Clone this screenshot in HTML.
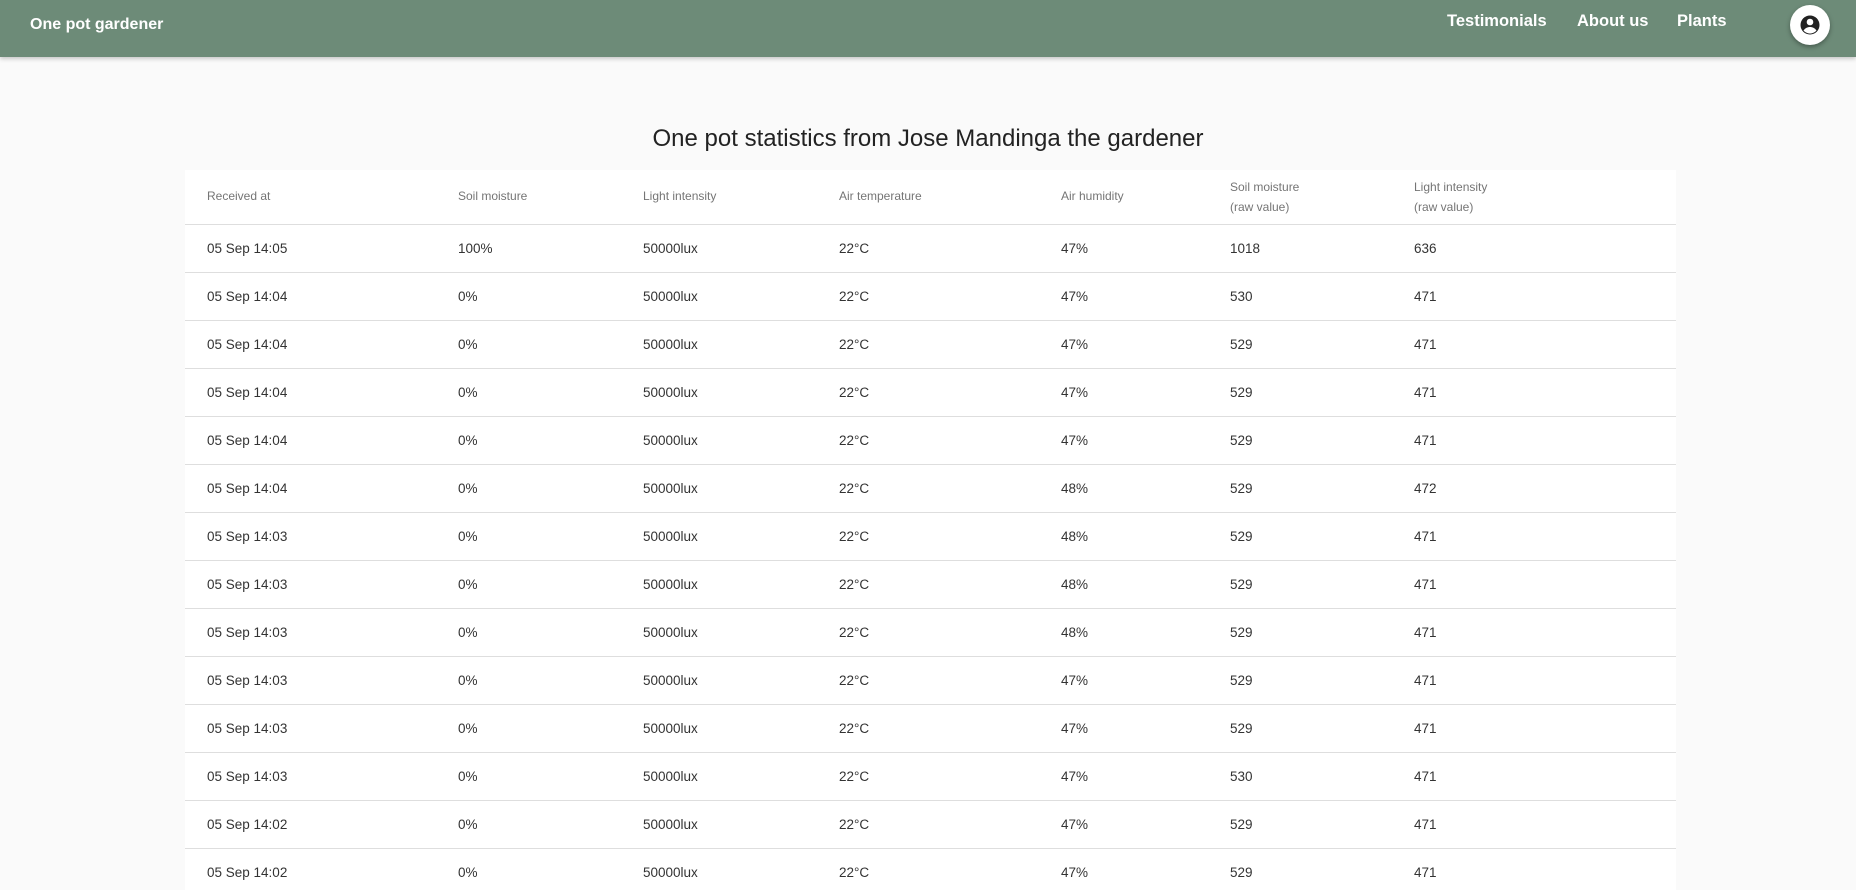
<!DOCTYPE html>
<html><head><meta charset="utf-8"><style>
*{margin:0;padding:0;box-sizing:border-box}
html,body{width:1856px;height:890px;overflow:hidden;background:#fafafa;font-family:"Liberation Sans",sans-serif}
.hdr{position:absolute;left:0;top:0;width:1856px;height:57px;background:#6d8b78;box-shadow:0 2px 4px rgba(0,0,0,.2)}
.brand{position:absolute;left:30px;top:16px;color:#fff;font-weight:bold;font-size:16px}
.nav{position:absolute;top:12px;color:#fff;font-weight:bold;font-size:16.5px}
.av{position:absolute;left:1790px;top:5px;width:40px;height:40px;border-radius:50%;background:#fff;box-shadow:0 2px 5px rgba(0,0,0,.35)}
h1{position:absolute;left:0;width:1856px;top:125px;text-align:center;font-weight:normal;font-size:24px;color:#222}
.tbl{position:absolute;left:185px;top:170px;width:1491px;height:720px;background:#fff;overflow:hidden}
.row{position:absolute;left:0;width:1491px;border-bottom:1px solid #dedede}
.c{position:absolute;white-space:nowrap}
.h .c{font-size:12px;color:#757575;line-height:20px}
.b .c{font-size:13.5px;color:#333}
</style></head><body>
<div class="hdr">
<div class="brand">One pot gardener</div>
<div class="nav" style="left:1447px">Testimonials</div>
<div class="nav" style="left:1577px">About us</div>
<div class="nav" style="left:1677px">Plants</div>
<div class="av"><svg width="40" height="40" viewBox="0 0 40 40"><circle cx="20" cy="20" r="9.5" fill="#222"/><circle cx="20" cy="17" r="3.3" fill="#fff"/><path d="M13.5 25.5c1.5-2.3 4-3.5 6.5-3.5s5 1.2 6.5 3.5c-1.6 1.8-3.9 3-6.5 3s-4.9-1.2-6.5-3z" fill="#fff"/></svg></div>
</div>
<h1>One pot statistics from Jose Mandinga the gardener</h1>
<div class="tbl" id="t"></div>
<script>
var t=document.getElementById('t');
var xs=[22,273,458,654,876,1045,1229];
var h=document.createElement('div');h.className='row h';h.style.top='0';h.style.height='55px';
var hd=[['Received at'],['Soil moisture'],['Light intensity'],['Air temperature'],['Air humidity'],['Soil moisture','(raw value)'],['Light intensity','(raw value)']];
hd.forEach(function(a,i){var d=document.createElement('div');d.className='c';d.style.left=xs[i]+'px';d.style.top=(a.length>1?7:16)+'px';d.innerHTML=a.join('<br>');h.appendChild(d);});
t.appendChild(h);
var rows=[['05 Sep 14:05','100%','47%','1018','636'],['05 Sep 14:04','0%','47%','530','471'],['05 Sep 14:04','0%','47%','529','471'],['05 Sep 14:04','0%','47%','529','471'],['05 Sep 14:04','0%','47%','529','471'],['05 Sep 14:04','0%','48%','529','472'],['05 Sep 14:03','0%','48%','529','471'],['05 Sep 14:03','0%','48%','529','471'],['05 Sep 14:03','0%','48%','529','471'],['05 Sep 14:03','0%','47%','529','471'],['05 Sep 14:03','0%','47%','529','471'],['05 Sep 14:03','0%','47%','530','471'],['05 Sep 14:02','0%','47%','529','471'],['05 Sep 14:02','0%','47%','529','471']];
rows.forEach(function(r,k){var rw=document.createElement('div');rw.className='row b';rw.style.top=(55+k*48)+'px';rw.style.height='48px';
var v=[r[0],r[1],'50000lux','22°C',r[2],r[3],r[4]];
v.forEach(function(s,i){var d=document.createElement('div');d.className='c';d.style.left=xs[i]+'px';d.style.top='16px';d.textContent=s;rw.appendChild(d);});
t.appendChild(rw);});
</script>
</body></html>
